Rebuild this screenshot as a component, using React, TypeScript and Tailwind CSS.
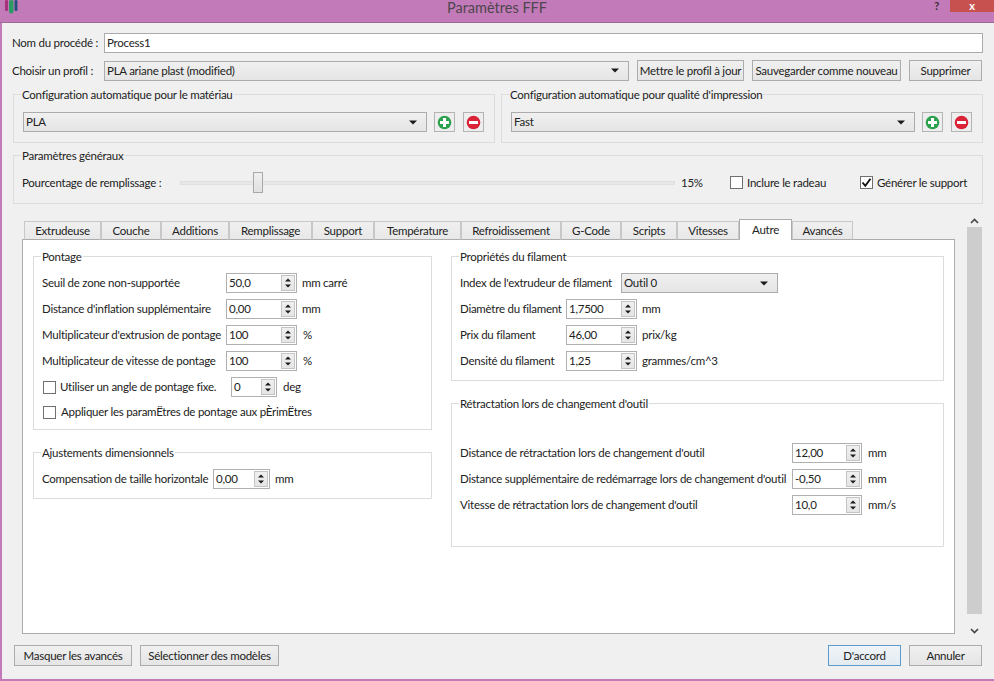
import React from "react";

const Tri = ({ up = false, w = 8 }: { up?: boolean; w?: number }) => (
  <svg width={w} height={w / 2 + 1} viewBox="0 0 8 5" className="block">
    <path d={up ? "M4 0.5L8 4.5H0Z" : "M0 0.5H8L4 4.5Z"} fill="#1a1a1a" />
  </svg>
);

const Btn = ({ w, children, focus = false }: { w: string; children: React.ReactNode; focus?: boolean }) => (
  <button
    className={`${w} h-[21px] shrink-0 flex items-center justify-center whitespace-nowrap border bg-gradient-to-b ${
      focus ? "border-[#5a9bd0] from-[#f0f4f8] to-[#e3ebf2]" : "border-[#acacac] from-[#f0f0f0] to-[#e5e5e5]"
    }`}
  >
    {children}
  </button>
);

const Combo = ({ w, value }: { w: string; value: string }) => (
  <div className={`${w} pl-[2px] h-[20px] shrink-0 flex items-center justify-between pr-[9px] border border-[#acacac] bg-gradient-to-b from-[#f0f0f0] to-[#e5e5e5]`}>
    <span>{value}</span>
    <Tri />
  </div>
);

const Spin = ({ w, value }: { w: string; value: string }) => (
  <div className={`${w} h-[20px] shrink-0 flex items-center justify-between pl-[2px] pr-[1px] border border-[#b0b0b0] bg-white`}>
    <span>{value}</span>
    <div className="w-[14px] h-[16px] flex flex-col items-center justify-center gap-[2px] border border-[#c4c4c4] bg-gradient-to-b from-[#f0f0f0] to-[#e5e5e5]">
      <Tri up w={6} />
      <Tri w={6} />
    </div>
  </div>
);

const Check = ({ checked = false }: { checked?: boolean }) => (
  <div className="w-[13px] h-[13px] shrink-0 border border-[#707070] bg-white flex items-center justify-center">
    {checked && (
      <svg width="11" height="11" viewBox="0 0 11 11">
        <path d="M1.5 5.5L4.3 8.8L9.5 1.8" fill="none" stroke="#111" strokeWidth="1.9" />
      </svg>
    )}
  </div>
);

const Group = ({ title, cls, children }: { title: string; cls: string; children?: React.ReactNode }) => (
  <div className={`relative border border-[#dcdcdc] ${cls}`}>
    <span className="absolute left-[7px] top-[-8px] px-[1px] bg-inherit leading-[16px] whitespace-nowrap">{title}</span>
    {children}
  </div>
);

const RoundIcon = ({ color, plus }: { color: string; plus?: boolean }) => (
  <div className="w-[21px] h-[20px] shrink-0 flex items-center justify-center border border-[#b4b4b4] bg-[#eeeeee]">
    <svg width="15" height="15" viewBox="0 0 15 15">
      <circle cx="7.5" cy="7.5" r="6.8" fill={color} />
      <rect x="3" y="6" width="9" height="3" fill="#fff" />
      {plus && <rect x="6" y="3" width="3" height="9" fill="#fff" />}
    </svg>
  </div>
);

const tabs: [string, string][] = [
  ["Extrudeuse", "w-[77px]"],
  ["Couche", "w-[60px]"],
  ["Additions", "w-[68px]"],
  ["Remplissage", "w-[83px]"],
  ["Support", "w-[62px]"],
  ["Température", "w-[87px]"],
  ["Refroidissement", "w-[100px]"],
  ["G-Code", "w-[60px]"],
  ["Scripts", "w-[56px]"],
  ["Vitesses", "w-[62px]"],
  ["Autre", "w-[53px]"],
  ["Avancés", "w-[61px]"],
];

const Row = ({ label, lw, value, sw, unit, ul = "ml-[5px]" }: { label: string; lw: string; value: string; sw: string; unit: string; ul?: string }) => (
  <div className="flex items-center h-[20px] mb-[6px]">
    <span className={`${lw} shrink-0 whitespace-nowrap`}>{label}</span>
    <Spin w={sw} value={value} />
    <span className={`${ul} whitespace-nowrap`}>{unit}</span>
  </div>
);

export default function App() {
  return (
    <div
      className="w-[994px] h-[681px] overflow-hidden flex flex-col bg-[#c27bb8] text-[#222222] text-[11.5px] leading-[16px] tracking-[-0.25px]"
      style={{ fontFamily: 'Lato, "Open Sans", sans-serif' }}
    >
      <div className="h-[23px] shrink-0 flex items-start border-b border-[#9d6a96]">
        <div className="flex-1">
          <svg width="15" height="14" viewBox="0 0 15 14" className="ml-[4px]">
            <rect x="1" y="0" width="3" height="11" rx="1.2" fill="#a83078" />
            <rect x="5" y="0" width="4.5" height="13.5" rx="2" fill="#2c9a63" />
            <rect x="10.5" y="0" width="3" height="11" rx="1.2" fill="#27507f" />
          </svg>
        </div>
        <span className="text-[14.5px] leading-[15px] tracking-normal text-[#4f454e]">Paramètres FFF</span>
        <div className="flex-1 flex items-start justify-end">
          <span className="mr-[11px] text-[11px] leading-[12px] font-bold text-[#3a2f3a]">?</span>
          <div className="w-[44px] h-[12px] bg-[#c7514f] flex items-start justify-center text-white text-[11px] leading-[12px] font-bold">x</div>
        </div>
      </div>

      <div className="ml-[2px] h-[656px] shrink-0 bg-[#f0f0f0] flex flex-col pt-[10px]">
        <div className="flex items-center h-[20px] pl-[10px]">
          <span className="w-[92px] shrink-0 whitespace-nowrap">Nom du procédé :</span>
          <div className="w-[879px] h-[20px] border border-[#ababab] bg-white pl-[2px] flex items-center">Process1</div>
        </div>

        <div className="flex items-center h-[21px] mt-[7px] pl-[10px]">
          <span className="w-[92px] shrink-0 whitespace-nowrap">Choisir un profil :</span>
          <Combo w="w-[525px]" value="PLA ariane plast (modified)" />
          <div className="ml-[8px]"><Btn w="w-[107px]">Mettre le profil à jour</Btn></div>
          <div className="ml-[8px]"><Btn w="w-[149px]">Sauvegarder comme nouveau</Btn></div>
          <div className="ml-[8px]"><Btn w="w-[73px]">Supprimer</Btn></div>
        </div>

        <div className="flex gap-[6px] mt-[13px] ml-[11px] bg-[#f0f0f0]">
          <Group title="Configuration automatique pour le matériau" cls="w-[482px] h-[49px] bg-[#f0f0f0] pt-[17px] pl-[9px]">
            <div className="flex items-center">
              <Combo w="w-[404px]" value="PLA" />
              <div className="ml-[7px]"><RoundIcon color="#2ea14e" plus /></div>
              <div className="ml-[8px]"><RoundIcon color="#dc2236" /></div>
            </div>
          </Group>
          <Group title="Configuration automatique pour qualité d'impression" cls="w-[482px] h-[49px] bg-[#f0f0f0] pt-[17px] pl-[9px]">
            <div className="flex items-center">
              <Combo w="w-[404px]" value="Fast" />
              <div className="ml-[7px]"><RoundIcon color="#2ea14e" plus /></div>
              <div className="ml-[8px]"><RoundIcon color="#dc2236" /></div>
            </div>
          </Group>
        </div>

        <Group title="Paramètres généraux" cls="w-[970px] h-[49px] mt-[12px] ml-[11px] bg-[#f0f0f0]">
          <div className="flex items-center h-[21px] mt-[16px] pl-[8px]">
            <span className="w-[158px] shrink-0 whitespace-nowrap">Pourcentage de remplissage :</span>
            <div className="w-[495px] h-[4px] shrink-0 flex items-center border border-[#e0e0e0] bg-[#e8e8e8] overflow-visible">
              <div className="ml-[72px] w-[10px] h-[21px] shrink-0 border border-[#a8a8a8] bg-gradient-to-b from-[#f0f0f0] to-[#e0e0e0]" />
            </div>
            <span className="ml-[6px] w-[49px] shrink-0">15%</span>
            <Check />
            <span className="ml-[4px] w-[113px] shrink-0">Inclure le radeau</span>
            <Check checked />
            <span className="ml-[4px] whitespace-nowrap">Générer le support</span>
          </div>
        </Group>

        <div className="flex h-[423px] mt-[10px] ml-[20px]">
          <div className="w-[933px] flex flex-col pt-[5px] pb-[3px]">
            <div className="flex items-end h-[21px] pl-[2px] relative z-10 -mb-px">
              {tabs.map(([t, w]) =>
                t === "Autre" ? (
                  <div key={t} className={`${w} h-[21px] flex items-center justify-center border border-b-0 border-[#acacac] bg-white`}>{t}</div>
                ) : (
                  <div key={t} className={`${w} h-[19px] flex items-center justify-center border border-[#c8c8c8] border-b-[#acacac] bg-gradient-to-b from-[#f0f0f0] to-[#e8e8e8]`}>{t}</div>
                )
              )}
            </div>
            <div className="flex-1 border border-[#acacac] bg-white flex gap-[19px] pt-[16px] pl-[10px]">
              <div className="w-[399px] flex flex-col gap-[22px] bg-white">
                <Group title="Pontage" cls="h-[174px] pt-[16px] pl-[8px] bg-white">
                  <Row label="Seuil de zone non-supportée" lw="w-[184px]" value="50,0" sw="w-[71px]" unit="mm carré" />
                  <Row label="Distance d'inflation supplémentaire" lw="w-[184px]" value="0,00" sw="w-[71px]" unit="mm" />
                  <Row label="Multiplicateur d'extrusion de pontage" lw="w-[184px]" value="100" sw="w-[71px]" unit="%" ul="ml-[6px]" />
                  <Row label="Multiplicateur de vitesse de pontage" lw="w-[184px]" value="100" sw="w-[71px]" unit="%" ul="ml-[6px]" />
                  <div className="flex items-center h-[20px] pl-[1px]">
                    <Check />
                    <span className="ml-[4px] w-[171px] shrink-0 whitespace-nowrap">Utiliser un angle de pontage fixe.</span>
                    <Spin w="w-[46px]" value="0" />
                    <span className="ml-[6px]">deg</span>
                  </div>
                  <div className="flex items-center h-[20px] mt-[5px] pl-[1px]">
                    <Check />
                    <span className="ml-[5px] whitespace-nowrap">Appliquer les paramËtres de pontage aux pÈrimËtres</span>
                  </div>
                </Group>
                <Group title="Ajustements dimensionnels" cls="h-[47px] pt-[16px] pl-[8px] bg-white">
                  <Row label="Compensation de taille horizontale" lw="w-[171px]" value="0,00" sw="w-[57px]" unit="mm" />
                </Group>
              </div>
              <div className="w-[493px] flex flex-col gap-[22px] bg-white">
                <Group title="Propriétés du filament" cls="h-[125px] pt-[16px] pl-[8px] bg-white">
                  <div className="flex items-center h-[20px] mb-[6px]">
                    <span className="w-[161px] shrink-0 whitespace-nowrap">Index de l'extrudeur de filament</span>
                    <Combo w="w-[157px]" value="Outil 0" />
                  </div>
                  <Row label="Diamètre du filament" lw="w-[106px]" value="1,7500" sw="w-[71px]" unit="mm" />
                  <Row label="Prix du filament" lw="w-[106px]" value="46,00" sw="w-[71px]" unit="prix/kg" />
                  <Row label="Densité du filament" lw="w-[106px]" value="1,25" sw="w-[71px]" unit="grammes/cm^3" />
                </Group>
                <Group title="Rétractation lors de changement d'outil" cls="h-[144px] pt-[39px] pl-[8px] bg-white">
                  <Row label="Distance de rétractation lors de changement d'outil" lw="w-[332px]" value="12,00" sw="w-[70px]" unit="mm" ul="ml-[6px]" />
                  <Row label="Distance supplémentaire de redémarrage lors de changement d'outil" lw="w-[332px]" value="-0,50" sw="w-[70px]" unit="mm" ul="ml-[6px]" />
                  <Row label="Vitesse de rétractation lors de changement d'outil" lw="w-[332px]" value="10,0" sw="w-[70px]" unit="mm/s" ul="ml-[6px]" />
                </Group>
              </div>
            </div>
          </div>
          <div className="ml-[12px] w-[15px] flex flex-col items-center">
            <div className="h-[13px] flex items-center justify-center">
              <svg width="9" height="6" viewBox="0 0 9 6"><path d="M1 5L4.5 1.5L8 5" fill="none" stroke="#444" strokeWidth="1.6" /></svg>
            </div>
            <div className="w-[15px] h-[387px] bg-[#cdcdcd]" />
            <div className="mt-[10px] h-[13px] flex items-center justify-center">
              <svg width="9" height="6" viewBox="0 0 9 6"><path d="M1 1L4.5 4.5L8 1" fill="none" stroke="#444" strokeWidth="1.6" /></svg>
            </div>
          </div>
        </div>

        <div className="flex mt-[8px] pl-[12px]">
          <Btn w="w-[118px]">Masquer les avancés</Btn>
          <div className="ml-[8px]"><Btn w="w-[139px]">Sélectionner des modèles</Btn></div>
          <div className="ml-[549px]"><Btn w="w-[73px]" focus>D'accord</Btn></div>
          <div className="ml-[8px]"><Btn w="w-[73px]">Annuler</Btn></div>
        </div>
      </div>
    </div>
  );
}
